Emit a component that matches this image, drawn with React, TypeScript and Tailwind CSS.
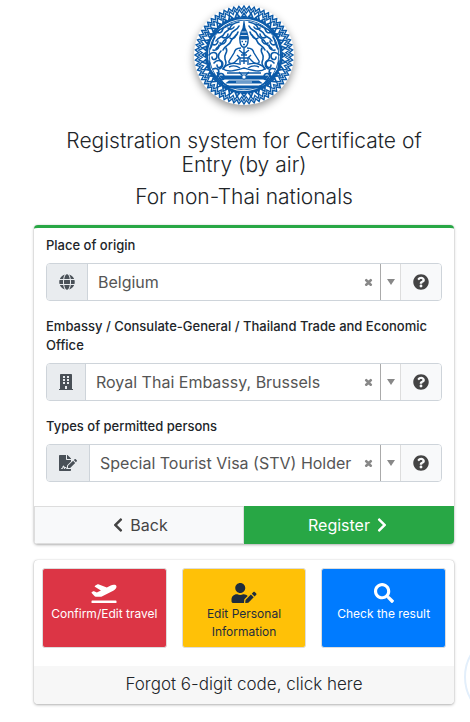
import React from "react";
import {
  FaBuilding,
  FaChevronLeft,
  FaChevronRight,
  FaFileSignature,
  FaGlobe,
  FaPlaneDeparture,
  FaQuestionCircle,
  FaSearch,
  FaTimes,
  FaUserEdit,
} from "react-icons/fa";

function zigzag(count: number, inner: number, outer: number): string {
  const pts: string[] = [];
  for (let i = 0; i < count * 2; i++) {
    const r = i % 2 === 0 ? outer : inner;
    const a = (Math.PI * i) / count;
    pts.push(`${(r * Math.cos(a)).toFixed(2)},${(r * Math.sin(a)).toFixed(2)}`);
  }
  return pts.join(" ");
}

function ring(count: number, radius: number): number[][] {
  return Array.from({ length: count }, (_, i) => {
    const deg = (360 * i) / count;
    const a = (deg * Math.PI) / 180;
    return [radius * Math.cos(a), radius * Math.sin(a), deg];
  });
}

function Flourish() {
  return (
    <g fill="none" stroke="#0b5aa8" strokeWidth="1.6" strokeLinecap="round">
      <path d="M-5 -33c-5 1-8 3-9 6s-5 3-6 6-6 3-8 7" />
      <path d="M-12 -31c-5 1-7 4-11 5s-5 5-8 7M-5 -29c-2 5-7 4-8 8s-6 4-8 8-5 4-7 7" />
      <path d="M-6 -23c-1 5-6 5-7 9s-6 4-8 9M-29 -18c-3 4-2 8-5 12" />
      <path d="M-27 -23c3 2 5 0 6-3M-22 -18c3 2 6 0 6-3M-32 -11c3 2 6 0 6-3M-16 -27c2 2 5 1 6-1" />
      <path d="M-24 -12c3 2 6 0 6-3M-31 -5c4 1 6-2 6-5M-14 -17c2 2 5 0 6-3" />
      <path d="M-35 0c3-4 8-3 8 1s-5 5-5 1M-30 8c3-4 8-3 8 1s-5 5-5 1" />
      <path d="M-23 -4c-4 4-3 8 0 10s2 7-2 8M-18 -7c3 5-3 6-1 11s1 6-2 10" />
      <path d="M-35 6c2 4-1 7 2 10s2 4 5 6M-31 14c5-2 7 2 5 5M-27 23c0-5 6-6 7-2s-3 5-4 2" />
      <path d="M-30 19c2 5 5 6 9 10" />
    </g>
  );
}

function Emblem() {
  return (
    <svg
      viewBox="-50 -50 100 100"
      role="img"
      aria-label="Ministry emblem"
      className="size-25 rounded-full bg-white shadow-[0_4px_9px_rgba(0,0,0,0.4)]"
    >
      <g fill="none" stroke="#0b5aa8">
        <polygon points={zigzag(60, 45.2, 49)} strokeWidth="1.4" />
        <polygon points={zigzag(60, 41.8, 45.6)} strokeWidth="1.3" />
        <circle r="37" strokeWidth="2" />
        <circle r="34.8" strokeWidth="0.9" />
      </g>
      {ring(36, 39.8).map(([x, y, deg]) => (
        <g key={deg} transform={`translate(${x} ${y}) rotate(${deg})`}>
          <path d="M-2.500-3.800L3.500 0-2.500 3.800z" fill="#0b5aa8" />
          <circle cx="-.3" r=".6" fill="#fff" />
        </g>
      ))}
      <Flourish />
      <g transform="scale(-1 1)">
        <Flourish />
      </g>
      <path d="M0-29l5 9 2 12h6l3 14 3 7h-38l3-7 3-14h6l2-12z" fill="#fff" />
      <g fill="#0b5aa8">
        <path d="M-.5-34h1l1 7 2 4 1.500 6h-10l1.500-6 2-4z" />
        <path d="M-5-17h10l-.5 5c-.5 3-2.500 5-4.500 5s-4-2-4.500-5z" />
        <path d="M-25 20.500h50l-3 4h-44zM-15 25.500h30l4 3h-38zM-22 30.500h44l-4 3h-36z" />
      </g>
      <path d="M-3.500-15.500h7l-.5 3.500c-.5 2-1.500 3.500-3 3.500s-2.500-1.500-3-3.500z" fill="#fff" />
      <g fill="none" stroke="#fff" strokeWidth=".8">
        <path d="M-2.500-23h5M-3.500-19.500h7M-8 27h16" />
      </g>
      <g fill="none" stroke="#0b5aa8" strokeWidth="1.4">
        <path d="M-2.500-13.500h1.500M1-13.500h1.500M-1-10.500h2" />
        <path d="M-3-7c-5 0-6 2-7 5l-5 8c-1 3 4 3 6 1l5-5M3-7c5 0 6 2 7 5l5 8c1 3-4 3-6 1l-5-5" />
        <path d="M-7 0l3 3v7M7 0l-3 3v7M-5-5l5 4 5-4M-3 0h6M-4 3h8M-3 6h6M0-7v16" />
        <path d="M-5 9c-7-2-14 1-16 5 5 4 14 1 21-1 7 2 16 5 21 1-2-4-9-7-16-5" />
        <path d="M-15 12c4-2 8-1 11 1M15 12c-4-2-8-1-11 1M-17 18h34" />
        <path d="M-5 17l5 5 5-5M-27 17c2 8 6 12 12 15M27 17c-2 8-6 12-12 15" />
      </g>
      <circle cy="22" r="2.200" fill="#fff" stroke="#0b5aa8" />
    </svg>
  );
}

interface FieldProps {
  id: string;
  label: string;
  value: string;
  icon: React.ReactNode;
}

function Field({ id, label, value, icon }: FieldProps) {
  return (
    <div>
      <label htmlFor={id} className="mb-2 block text-[13px] leading-[19px] font-medium text-[#212529]">
        {label}
      </label>
      <div className="flex h-[38px] overflow-hidden rounded border border-[#ced4da] bg-white">
        <span className="flex shrink-0 items-center border-r border-[#ced4da] bg-[#e9ecef] px-3 text-base text-[#495057]">
          {icon}
        </span>
        <select
          id={id}
          defaultValue={value}
          className="min-w-0 flex-1 appearance-none bg-transparent pl-[10px] text-base text-[#555]"
        >
          <option>{value}</option>
        </select>
        <button type="button" aria-label={`Clear ${label}`} className="px-[7px] text-[9px] text-[#888]">
          <FaTimes strokeWidth={60} stroke="currentColor" />
        </button>
        <span className="flex w-5 shrink-0 items-center justify-center border-l border-[#aaa]">
          <span className="border-x-4 border-t-[6px] border-x-transparent border-t-[#888]" />
        </span>
        <button
          type="button"
          aria-label={`Help: ${label}`}
          className="flex w-[41px] shrink-0 items-center justify-center border-l border-[#ddd] bg-[#f8f9fa] text-base text-[#444]"
        >
          <FaQuestionCircle />
        </button>
      </div>
    </div>
  );
}

interface ActionProps {
  label: string;
  icon: React.ReactNode;
  tone: string;
}

function Action({ label, icon, tone }: ActionProps) {
  return (
    <button
      type="button"
      className={`flex h-20 flex-col items-center rounded-[3px] border border-[#ddd] px-1 pt-3 text-xs leading-[18px] ${tone}`}
    >
      <span className="flex h-6 items-center text-xl">{icon}</span>
      <span>{label}</span>
    </button>
  );
}

export default function App() {
  return (
    <div className="relative overflow-hidden bg-white pt-[5px] pr-4 pb-[18px] pl-[34px] font-[Inter,'Noto_Sans',sans-serif] text-[#212529]">
      <header className="flex flex-col items-center text-center text-[21px] leading-6 font-light">
        <Emblem />
        <h1 className="mt-6 mb-2 px-4">Registration system for Certificate of Entry (by air)</h1>
        <h2>For non-Thai nationals</h2>
      </header>

      <form className="mt-4 overflow-hidden rounded border-t-[3px] border-[#28a745] shadow-[0_0_1px_rgba(0,0,0,0.25),0_1px_3px_rgba(0,0,0,0.3)]">
        <div className="flex flex-col gap-4 px-3 pt-2 pb-6">
          <Field id="origin" label="Place of origin" value="Belgium" icon={<FaGlobe />} />
          <Field
            id="embassy"
            label="Embassy / Consulate-General / Thailand Trade and Economic Office"
            value="Royal Thai Embassy, Brussels"
            icon={<FaBuilding className="h-4 w-[14px]" />}
          />
          <Field
            id="permit"
            label="Types of permitted persons"
            value="Special Tourist Visa (STV) Holder"
            icon={<FaFileSignature className="h-4 w-[18px]" />}
          />
        </div>
        <div className="grid grid-cols-2 text-base">
          <button
            type="button"
            className="flex h-[38px] items-center justify-center gap-1 border border-[#ddd] bg-[#f8f9fa] text-[#444]"
          >
            <FaChevronLeft /> Back
          </button>
          <button type="submit" className="flex h-[38px] items-center justify-center gap-1 bg-[#28a745] text-white">
            Register <FaChevronRight />
          </button>
        </div>
      </form>

      <section className="mt-4 overflow-hidden rounded shadow-[0_0_1px_rgba(0,0,0,0.25),0_1px_3px_rgba(0,0,0,0.3)]">
        <div className="grid grid-cols-3 gap-[15px] px-2 pt-2 pb-[18px]">
          <Action
            label="Confirm/Edit travel"
            icon={<FaPlaneDeparture className="h-5 w-[26px]" />}
            tone="bg-[#dc3545] text-white"
          />
          <Action
            label="Edit Personal Information"
            icon={<FaUserEdit className="h-5 w-[26px]" />}
            tone="bg-[#ffc107] text-[#1f2d3d]"
          />
          <Action label="Check the result" icon={<FaSearch />} tone="bg-[#007bff] text-white" />
        </div>
        <a href="#forgot" className="flex h-[38px] items-center justify-center bg-[#f7f7f7] text-[17px] font-light">
          Forgot 6-digit code, click here
        </a>
      </section>

      <div className="absolute -right-[84px] bottom-0 size-[90px] rounded-full border-2 border-[#e3effb]" />
    </div>
  );
}
